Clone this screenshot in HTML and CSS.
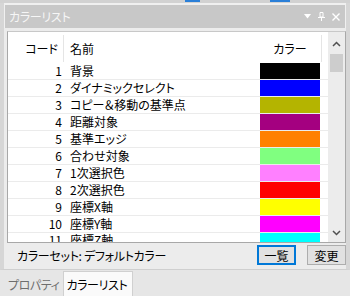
FILE: index.html
```
<!DOCTYPE html>
<html>
<head>
    <meta charset="utf-8" />
    <title>カラーリスト</title>
    <link rel="stylesheet" href="styles.css">
</head>
<body>
    <div class="frame">
        <div class="top-strip">
            <span class="mark mark-a"></span>
            <span class="mark mark-b"></span>
        </div>
        <div class="dock">
            <div class="titlebar">
                <span class="title">カラーリスト</span>
                <span class="title-icons">
                    <svg width="7" height="5" viewBox="0 0 7 5"><path d="M0 0H7L3.5 4.5Z" fill="#fff"/></svg>
                    <svg width="7" height="9" viewBox="0 0 7 9"><path d="M2 0.5H5V5H2Z M0 5.5H7 M3.5 5.5V9" stroke="#fff" fill="none" stroke-width="1"/></svg>
                    <svg width="8" height="8" viewBox="0 0 8 8"><path d="M0.5 0.5L7.5 7.5M7.5 0.5L0.5 7.5" stroke="#fff" stroke-width="1.4"/></svg>
                </span>
            </div>
            <div class="content">
                <div class="list">
                    <div class="table">
                        <div class="head">
                            <div class="c-code">コード</div>
                            <div class="c-name">名前</div>
                            <div class="c-color">カラー</div>
                        </div>
                        <div class="rows">
                            <div class="row"><div class="c-code">1</div><div class="c-name">背景</div><div class="c-color"><span class="swatch" style="background:#000000"></span></div></div>
                            <div class="row"><div class="c-code">2</div><div class="c-name">ダイナミックセレクト</div><div class="c-color"><span class="swatch" style="background:#0000ff"></span></div></div>
                            <div class="row"><div class="c-code">3</div><div class="c-name">コピー＆移動の基準点</div><div class="c-color"><span class="swatch" style="background:#b4b400"></span></div></div>
                            <div class="row"><div class="c-code">4</div><div class="c-name">距離対象</div><div class="c-color"><span class="swatch" style="background:#a40080"></span></div></div>
                            <div class="row"><div class="c-code">5</div><div class="c-name">基準エッジ</div><div class="c-color"><span class="swatch" style="background:#ff8000"></span></div></div>
                            <div class="row"><div class="c-code">6</div><div class="c-name">合わせ対象</div><div class="c-color"><span class="swatch" style="background:#80ff80"></span></div></div>
                            <div class="row"><div class="c-code">7</div><div class="c-name">1次選択色</div><div class="c-color"><span class="swatch" style="background:#ff80ff"></span></div></div>
                            <div class="row"><div class="c-code">8</div><div class="c-name">2次選択色</div><div class="c-color"><span class="swatch" style="background:#ff0000"></span></div></div>
                            <div class="row"><div class="c-code">9</div><div class="c-name">座標X軸</div><div class="c-color"><span class="swatch" style="background:#ffff00"></span></div></div>
                            <div class="row"><div class="c-code">10</div><div class="c-name">座標Y軸</div><div class="c-color"><span class="swatch" style="background:#ff00ff"></span></div></div>
                            <div class="row row-cut"><div class="c-code">11</div><div class="c-name">座標Z軸</div><div class="c-color"><span class="swatch" style="background:#00ffff"></span></div></div>
                        </div>
                    </div>
                    <div class="scroll">
                        <svg class="arrow" width="9" height="6" viewBox="0 0 9 6"><path d="M1 5L4.5 1.5L8 5" stroke="#505050" stroke-width="1.5" fill="none"/></svg>
                        <div class="thumb"></div>
                        <div class="track"></div>
                        <svg class="arrow" width="9" height="6" viewBox="0 0 9 6"><path d="M1 1L4.5 4.5L8 1" stroke="#505050" stroke-width="1.5" fill="none"/></svg>
                    </div>
                </div>
                <div class="footer">
                    <span class="set-label">カラーセット: デフォルトカラー</span>
                    <span class="buttons">
                        <button class="btn btn-focus">一覧</button>
                        <button class="btn">変更</button>
                    </span>
                </div>
            </div>
        </div>
        <div class="tabs">
            <span class="tab">プロパティ</span>
            <span class="tab tab-active">カラーリスト</span>
        </div>
    </div>
</body>
</html>
```

FILE: styles.css
```
body {
	margin: 0;
	background: #e8e8e8;
	font-family: "Noto Sans CJK JP", "DejaVu Sans", sans-serif;
	font-feature-settings: "palt";
	font-size: 12px;
	color: #000;
}

.frame {
	width: 350px;
	height: 296px;
	display: flex;
	flex-direction: column;
	overflow: hidden;
}

.top-strip {
	height: 3px;
	flex-shrink: 0;
	background: #d2d2d2;
	display: flex;
}
.mark {
	height: 2px;
	background: #2a7fd8;
}
.mark-a { margin-left: 185px; width: 15px; }
.mark-b { margin-left: 70px; width: 20px; }

/***************************
	Dock pane
***************************/
.dock {
	height: 267px;
	flex-shrink: 0;
	background: #f0f0f0;
	border-left: 4px solid #d6d6d6;
	border-right: 4px solid #d6d6d6;
	border-bottom: 1px solid #cfcfcf;
	box-sizing: border-box;
	display: flex;
	flex-direction: column;
	padding-top: 2px;
}

.titlebar {
	height: 23px;
	flex-shrink: 0;
	margin: 0 1px;
	background: #c8c8c8;
	color: #f6f6f6;
	display: flex;
	align-items: center;
	justify-content: space-between;
	padding: 0 5px 0 4px;
}
.title {
	font-size: 12px;
	letter-spacing: -0.3px;
}
.title-icons {
	display: flex;
	align-items: center;
	gap: 7px;
}

.content {
	flex: 1;
	display: flex;
	flex-direction: column;
	padding: 3px 0 0 3px;
	background: #ececec;
}

.list {
	height: 212px;
	flex-shrink: 0;
	border: 1px solid #a8a8a8;
	border-top-color: #c8c8c8;
	background: #fff;
	display: flex;
	box-sizing: border-box;
	overflow: hidden;
}

.table {
	flex: 1;
	overflow: hidden;
}

.head {
	height: 30px;
	display: flex;
	align-items: center;
	padding-top: 3px;
	box-sizing: border-box;
}
.head > div {
	height: 100%;
	display: flex;
	align-items: center;
}
.head .c-code {
	justify-content: flex-end;
	border-right: 1px solid #e5e5e5;
}
.head .c-color {
	justify-content: center;
	border-right: 1px solid #e5e5e5;
}

.c-code {
	width: 56px;
	text-align: right;
	padding-right: 5px;
	box-sizing: border-box;
}
.c-name {
	width: 195px;
	padding-left: 6px;
	box-sizing: border-box;
	white-space: nowrap;
}
.c-color {
	width: 62px;
}

.row {
	height: 17px;
	display: flex;
	align-items: center;
	border-bottom: 1px solid #ebebeb;
	box-sizing: border-box;
	line-height: 16px;
}
.row .c-code {
	padding-right: 2px;
}
.rows {
	padding-top: 1px;
}
.row-cut {
	height: 9px;
	align-items: flex-start;
	overflow: hidden;
	border-bottom: none;
	line-height: 14px;
}
.row-cut > div {
	height: 9px;
	overflow: hidden;
}

.swatch {
	display: block;
	width: 60px;
	height: 16px;
	margin-left: 1px;
}

/***************************
	Scrollbar
***************************/
.scroll {
	width: 17px;
	background: #ececec;
	display: flex;
	flex-direction: column;
	align-items: center;
	padding: 9px 0 6px;
	box-sizing: border-box;
}
.thumb {
	width: 13px;
	height: 18px;
	margin-top: 7px;
	background: #cdcdcd;
}
.track {
	flex: 1;
}

/***************************
	Footer
***************************/
.footer {
	flex: 1;
	display: flex;
	align-items: center;
	justify-content: space-between;
	padding: 0 0 2px 10px;
}
.set-label {
	font-size: 12px;
	letter-spacing: -0.3px;
}
.buttons {
	display: flex;
	gap: 11px;
}
.btn {
	width: 39px;
	height: 20px;
	padding: 0;
	font-family: inherit;
	font-size: 12px;
	background: #e1e1e1;
	border: 1px solid #adadad;
	color: #000;
}
.btn-focus {
	border: 2px solid #0078d7;
}

/***************************
	Tabs
***************************/
.tabs {
	flex: 1;
	display: flex;
	align-items: flex-end;
	padding-left: 8px;
	background: #e6e6e6;
}
.tab {
	height: 24px;
	display: flex;
	align-items: center;
	padding: 0 3px 0 0;
	color: #6e6e6e;
	letter-spacing: -0.4px;
}
.tab-active {
	background: #fafafa;
	color: #000;
	border: 1px solid #d0d0d0;
	border-bottom: none;
	padding: 0 5px 0 3px;
}
```
